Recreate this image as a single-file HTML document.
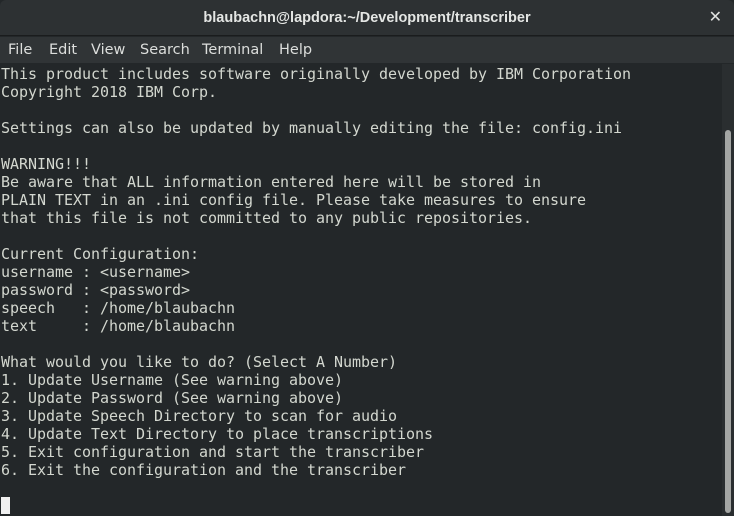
<!DOCTYPE html>
<html><head><style>
html,body{margin:0;padding:0;width:734px;height:516px;overflow:hidden;background:#232729;}
.title{position:absolute;left:0;top:0;width:734px;height:36px;background:#2d3133;border-radius:6px 6px 0 0;border-bottom:1px solid #1a1c1d;box-sizing:border-box;color:#e4e6e4;font:bold 14.5px "Liberation Sans","DejaVu Sans",sans-serif;text-align:center;line-height:36px;}
.x{position:absolute;right:12px;top:0;font-size:16px;color:#dfe1df;}
.menu{position:absolute;left:0;top:37px;width:734px;height:26px;background:#303436;color:#dcdedc;font:14.5px "DejaVu Sans",sans-serif;line-height:26px;}
.menu span{position:absolute;top:0;}
.term{position:absolute;left:1px;top:65px;width:720px;color:#d3d7cf;font:15px "DejaVu Sans Mono","Liberation Mono",monospace;line-height:18px;white-space:pre;letter-spacing:-0.03px;}
.track{position:absolute;left:722px;top:64px;width:12px;height:452px;background:#2a2e30;}
.thumb{position:absolute;left:725px;top:130px;width:6px;height:383px;background:#a4a6a4;border-radius:3px;}
.cur{display:inline-block;width:9px;height:17px;background:#f0f0f0;vertical-align:top;}
</style></head><body>
<div class="title">blaubachn@lapdora:~/Development/transcriber<span class="x">✕</span></div>
<div class="menu"><span style="left:8px">File</span><span style="left:49px">Edit</span><span style="left:91px">View</span><span style="left:140px">Search</span><span style="left:202px">Terminal</span><span style="left:279px">Help</span></div>
<div class="term">This product includes software originally developed by IBM Corporation
Copyright 2018 IBM Corp.

Settings can also be updated by manually editing the file: config.ini

WARNING!!!
Be aware that ALL information entered here will be stored in
PLAIN TEXT in an .ini config file. Please take measures to ensure
that this file is not committed to any public repositories.

Current Configuration:
username : &lt;username&gt;
password : &lt;password&gt;
speech   : /home/blaubachn
text     : /home/blaubachn

What would you like to do? (Select A Number)
1. Update Username (See warning above)
2. Update Password (See warning above)
3. Update Speech Directory to scan for audio
4. Update Text Directory to place transcriptions
5. Exit configuration and start the transcriber
6. Exit the configuration and the transcriber

<span class="cur"></span></div>
<div class="track"></div><div class="thumb"></div>
</body></html>
